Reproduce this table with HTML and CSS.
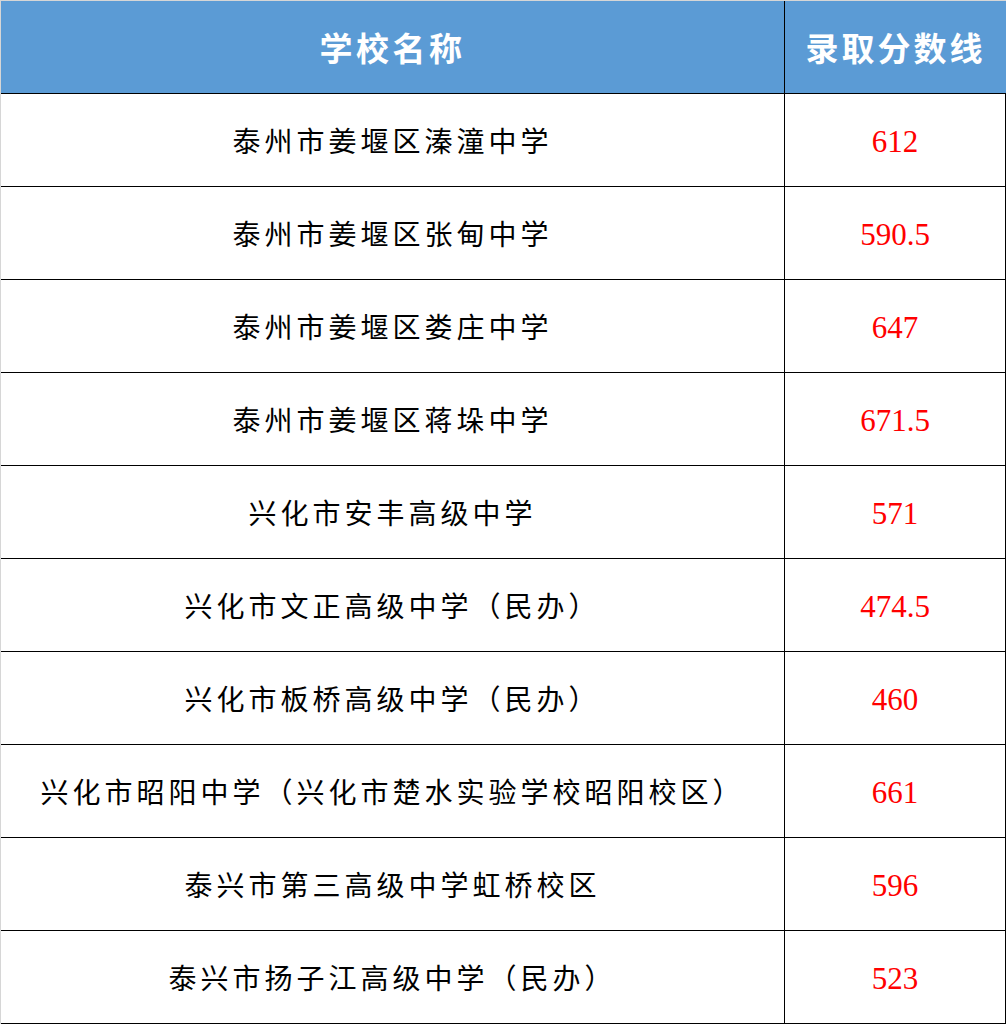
FILE: index.html
```html
<!DOCTYPE html>
<html lang="zh-CN">
<head>
<meta charset="utf-8">
<title>录取分数线</title>
<link rel="stylesheet" href="styles.css">
</head>
<body>
<div class="table">
  <div class="row head">
    <div class="cell name">学校名称</div>
    <div class="cell score last">录取分数线</div>
  </div>
  <div class="row"><div class="cell name">泰州市姜堰区溱潼中学</div><div class="cell score">612</div></div>
  <div class="row"><div class="cell name">泰州市姜堰区张甸中学</div><div class="cell score">590.5</div></div>
  <div class="row"><div class="cell name">泰州市姜堰区娄庄中学</div><div class="cell score">647</div></div>
  <div class="row"><div class="cell name">泰州市姜堰区蒋垛中学</div><div class="cell score">671.5</div></div>
  <div class="row"><div class="cell name">兴化市安丰高级中学</div><div class="cell score">571</div></div>
  <div class="row"><div class="cell name">兴化市文正高级中学（民办）</div><div class="cell score">474.5</div></div>
  <div class="row"><div class="cell name">兴化市板桥高级中学（民办）</div><div class="cell score">460</div></div>
  <div class="row"><div class="cell name">兴化市昭阳中学（兴化市楚水实验学校昭阳校区）</div><div class="cell score">661</div></div>
  <div class="row"><div class="cell name">泰兴市第三高级中学虹桥校区</div><div class="cell score">596</div></div>
  <div class="row"><div class="cell name">泰兴市扬子江高级中学（民办）</div><div class="cell score">523</div></div>
</div>
</body>
</html>
```

FILE: styles.css
```css
html, body {
  margin: 0;
  padding: 0;
  background: #ffffff;
}

.table {
  width: 1005px;
  border-left: 1px solid #d6d6d6;
  border-top: 1px solid #d6d6d6;
  display: flex;
  flex-direction: column;
}

.row {
  display: flex;
  height: 92px;
  border-bottom: 1px solid #000000;
}

.cell {
  display: flex;
  align-items: center;
  justify-content: center;
  border-right: 1px solid #000000;
  box-sizing: content-box;
}

.name {
  width: 783px;
  font-family: "Noto Sans CJK SC", "Noto Sans", sans-serif;
  font-size: 28px;
  letter-spacing: 4px;
  color: #000000;
}

.score {
  width: 220px;
  font-family: "Liberation Serif", "Times New Roman", serif;
  font-size: 31px;
  color: #ff0000;
  padding-top: 3px;
  height: 89px;
}

.head {
  background: #5b9bd5;
}

.head .cell {
  color: #ffffff;
  font-family: "Noto Sans CJK SC", "Noto Sans", sans-serif;
  font-weight: 700;
  font-size: 33px;
  letter-spacing: 3px;
}

.head .name {
  letter-spacing: 3.5px;
}

.head .last {
  width: 221px;
  height: 92px;
  padding-top: 0;
  border-right: none;
}
```
